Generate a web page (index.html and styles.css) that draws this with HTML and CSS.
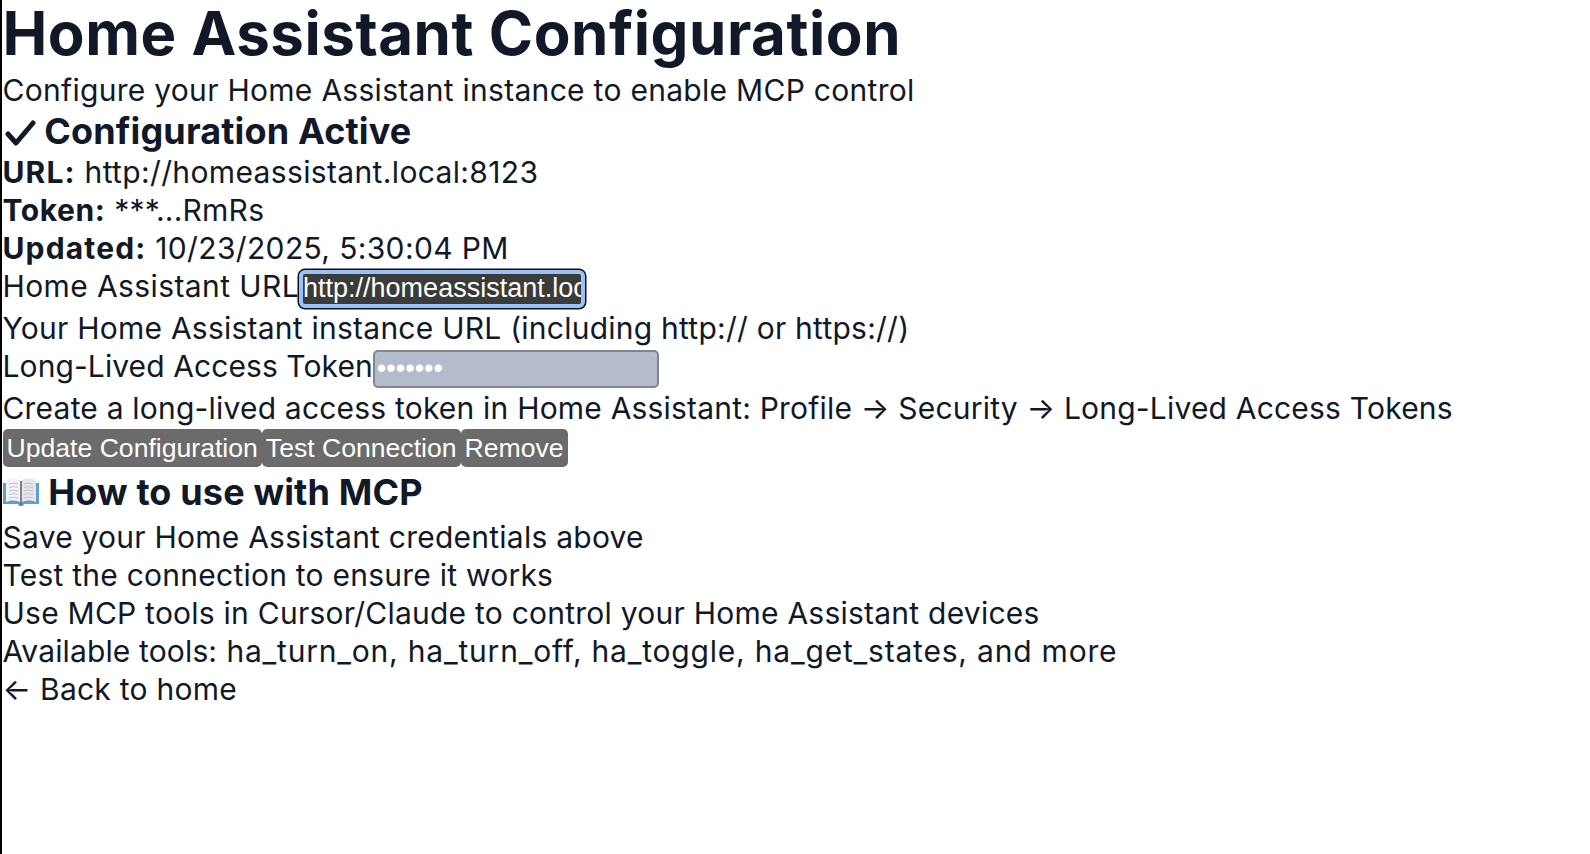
FILE: index.html
```html
<!DOCTYPE html>
<html lang="en">
<head>
<meta charset="utf-8">
<title>Home Assistant Configuration</title>
<link rel="stylesheet" href="styles.css">
</head>
<body>
<main class="page">
  <h1 class="title">Home Assistant Configuration</h1>
  <p class="line line-sub">Configure your Home Assistant instance to enable MCP control</p>
  <h2 class="heading"><svg class="check" viewBox="0 0 32 28" role="img" aria-label="Check mark"><path fill="none" stroke="#111827" stroke-width="5" stroke-linecap="round" stroke-linejoin="round" d="M4 15l8 9L29 4"/></svg> Configuration Active</h2>
  <p class="line line-value"><strong>URL:</strong> http://homeassistant.local:8123</p>
  <p class="line line-token"><strong>Token:</strong> ***...RmRs</p>
  <p class="line line-value"><strong>Updated:</strong> 10/23/2025, 5:30:04 PM</p>
  <div class="field"><label class="label-wide" for="url">Home Assistant URL</label><input id="url" class="input input-focus" type="text" value="http://homeassistant.local:8123"></div>
  <p class="line">Your Home Assistant instance URL (including http:// or https://)</p>
  <div class="field"><label class="label-tight" for="token">Long-Lived Access Token</label><input id="token" class="input input-filled" type="password" value="1234567"></div>
  <p class="line line-create">Create a long-lived access token in Home Assistant: Profile → Security → Long-Lived Access Tokens</p>
  <div class="actions">
    <button class="btn" type="button">Update Configuration</button><button class="btn" type="button">Test Connection</button><button class="btn" type="button">Remove</button>
  </div>
  <h2 class="heading heading-how"><svg class="book" viewBox="0 0 36 30" aria-hidden="true"><path fill="#5f9fd0" d="M0 6h36v21H21l-1 2h-4l-1-2H0z"/><path fill="#f1f2f4" d="M3 3c6-2 11-2 15 1v22c-4-3-9-3-15-1z"/><path fill="#e4e6ea" d="M33 3c-6-2-11-2-15 1v22c4-3 9-3 15-1z"/><path fill="none" stroke="#c2c6cc" stroke-width="1.200" d="M6 7c3-1 6-1 9 0M6 10.500c3-1 6-1 9 0M6 14c3-1 6-1 9 0M6 17.500c3-1 6-1 9 0M6 21c3-1 6-1 9 0M21 7c3-1 6-1 9 0M21 10.500c3-1 6-1 9 0M21 14c3-1 6-1 9 0M21 17.500c3-1 6-1 9 0M21 21c3-1 6-1 9 0"/><path fill="none" stroke="#5b5f66" stroke-width="1.500" d="M18 4v24"/></svg> How to use with MCP</h2>
  <ol class="steps">
    <li>Save your Home Assistant credentials above</li>
    <li>Test the connection to ensure it works</li>
    <li>Use MCP tools in Cursor/Claude to control your Home Assistant devices</li>
    <li class="step-tools"><span class="tools-label">Available tools:</span> ha_turn_on, ha_turn_off, ha_toggle, ha_get_states, and more</li>
  </ol>
  <a class="back" href="#">← Back to home</a>
</main>
</body>
</html>
```
FILE: styles.css
```css
* { box-sizing: border-box; }
html, body { margin: 0; height: 100%; background: #fff; }
body {
  border-left: 2px solid #000;
  padding-left: 0.5px;
  font-family: Inter, "Liberation Sans", sans-serif;
  font-size: 30px;
  line-height: 38px;
  letter-spacing: 0.24px;
  color: #111827;
}
.title { margin: 0 0 5px; font-size: 60px; line-height: 66px; font-weight: 700; letter-spacing: 0.54px; }
.line { margin: 0; }
.line-sub { letter-spacing: 0.29px; }
.line-value { letter-spacing: 0.36px; }
.line-value strong { letter-spacing: 1.15px; }
.line-token strong { letter-spacing: 0.6px; }
.label-wide { letter-spacing: 0.4px; }
.label-tight { letter-spacing: 0.09px; }
.line-create { letter-spacing: 0.2px; }
.step-tools { letter-spacing: 0.8px; }
.tools-label { letter-spacing: 0.14px; }
strong { font-weight: 700; }
.heading { margin: 0; font-size: 36px; line-height: 44px; font-weight: 700; letter-spacing: 0.15px; }
.check { width: 32px; height: 28px; vertical-align: -3px; margin-left: 1px; }
.heading-how { margin-top: 3px; }
.book { width: 36px; height: 30px; vertical-align: -2px; margin-right: 1px; }
.field { display: block; height: 42px; }
.input {
  width: 286px;
  height: 38px;
  padding: 1px 1px;
  border: 2px solid #767676;
  border-radius: 5px;
  font-family: "Liberation Sans", sans-serif;
  font-size: 27px;
  letter-spacing: 0;
  color: #fff;
  background: #3b3b3b;
  vertical-align: baseline;
}
.input-focus {
  padding: 0;
  border: 4px solid #9bc2f7;
  border-radius: 6px;
  box-shadow: 0 0 0 1.5px #10131a;
  outline: 0;
}
.input-filled { padding-left: 2px; background: #b4bbcb; border-color: #808590; }
.actions { display: flex; margin-top: 2px; }
.btn {
  height: 38px;
  padding: 0 4px;
  border: 0;
  border-radius: 5px;
  background: #6b6b6b;
  color: #fff;
  font-family: "Liberation Sans", sans-serif;
  font-size: 26.6px;
  letter-spacing: 0;
}
.steps { margin: 4px 0 0; padding: 0; list-style: none; }
.back { color: inherit; text-decoration: none; display: block; }
```
